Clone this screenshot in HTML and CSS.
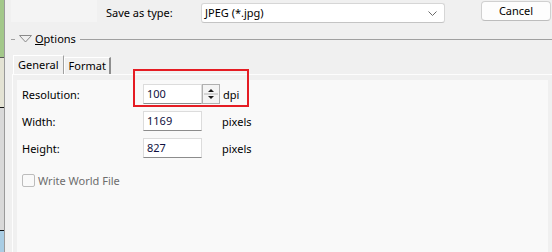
FILE: index.html
```html
<!DOCTYPE html>
<html>
<head>
<meta charset="utf-8">
<link rel="stylesheet" href="styles.css">
</head>
<body>
<div class="screen">
  <div class="mapstrip">
    <div class="m-green"></div>
    <div class="m-dark"></div>
    <div class="m-beige"></div>
    <div class="m-black"></div>
    <div class="m-grey"></div>
    <div class="m-black"></div>
    <div class="m-blue"></div>
  </div>
  <div class="dialog">
    <div class="toprow">
      <div class="preview"></div>
      <div class="typelabel">Save as type:</div>
      <div class="combo">
        <span>JPEG (*.jpg)</span>
        <svg class="chev" width="9" height="5" viewBox="0 0 9 5"><polyline points="0.5,0.5 4.5,4.5 8.5,0.5" fill="none" stroke="#6a6a6a" stroke-width="1"/></svg>
      </div>
      <div class="btn">Cancel</div>
    </div>
    <div class="optrow">
      <div class="dash"></div>
      <svg class="tri" width="13" height="8" viewBox="0 0 13 8"><polygon points="0.5,0.5 12.5,0.5 6.5,7" fill="none" stroke="#8a8a8a" stroke-width="1"/></svg>
      <div class="opttext"><u>O</u>ptions</div>
      <div class="optline"></div>
    </div>
    <div class="tabs">
      <div class="tab active">General</div>
      <div class="tab">Format</div>
    </div>
    <div class="page">
      <div class="panel">
        <div class="form">
          <div class="lbl">Resolution:</div>
          <div class="field"><div class="input">100</div><div class="spin">
            <svg width="16" height="18" viewBox="0 0 16 18"><polygon points="5,7 11,7 8,4" fill="#1a1a1a"/><line x1="1" y1="9" x2="15" y2="9" stroke="#b4b4b4"/><polygon points="5,11 11,11 8,14" fill="#1a1a1a"/></svg>
          </div><span class="unit dpi">dpi</span></div>
          <div class="lbl">Width:</div>
          <div class="field"><div class="input">1169</div><span class="unit">pixels</span></div>
          <div class="lbl">Height:</div>
          <div class="field"><div class="input">827</div><span class="unit">pixels</span></div>
        </div>
        <div class="check"><div class="box"></div><span>Write World File</span></div>
        <div class="highlight"></div>
      </div>
    </div>
  </div>
</div>
</body>
</html>
```
FILE: styles.css
```css
html, body {
  margin: 0;
  padding: 0;
  width: 552px;
  height: 252px;
  overflow: hidden;
  background: #f0f0f0;
  font-family: "Noto Sans", "Liberation Sans", sans-serif;
  font-size: 11px;
  color: #000;
}
.screen {
  display: flex;
  height: 252px;
}
.mapstrip {
  width: 4px;
  display: flex;
  flex-direction: column;
  border-right: 1px solid #9a9a9a;
}
.m-green { height: 57px; background: #a3c88a; }
.m-dark { height: 1px; background: #555; }
.m-beige { height: 49px; background: #e4e3d4; }
.m-black { height: 1px; background: #111; }
.m-grey { height: 122px; background: #d9d9d9; }
.m-blue { flex: 1; background: #a9cde4; }

.dialog {
  flex: 1;
  display: flex;
  flex-direction: column;
  background: #f0f0f0;
  min-width: 0;
}
.toprow {
  display: flex;
  align-items: flex-start;
  height: 32px;
}
.preview {
  margin-left: 6px;
  width: 86px;
  height: 22px;
  background: #f4f4f4;
}
.typelabel {
  margin-left: 9px;
  width: 95px;
  margin-top: 3px;
  line-height: 20px;
}
.combo {
  margin-top: 3px;
  width: 244px;
  height: 20px;
  box-sizing: border-box;
  background: #fff;
  border: 1px solid #d6d6d6;
  border-bottom-color: #c4c4c4;
  border-radius: 3px;
  display: flex;
  align-items: center;
  justify-content: space-between;
  padding: 0 4px 0 3px;
  line-height: 18px;
}
.chev { margin-right: 3px; }
.btn {
  margin-left: 36px;
  margin-top: 1px;
  width: 70px;
  height: 20px;
  box-sizing: border-box;
  background: #fdfdfd;
  border: 1px solid #d0d0d0;
  border-bottom-color: #bdbdbd;
  border-radius: 4px;
  text-align: center;
  line-height: 18px;
}
.optrow {
  display: flex;
  align-items: center;
  height: 14px;
}
.dash {
  margin-left: 6px;
  width: 4px;
  height: 1px;
  background: #a0a0a0;
}
.tri { margin-left: 4px; }
.opttext {
  margin-left: 3px;
  line-height: 14px;
}
.optline {
  flex: 1;
  margin-left: 4px;
  height: 1px;
  background: #a0a0a0;
}
.tabs {
  display: flex;
  align-items: flex-end;
  margin-top: 9px;
  margin-left: 8px;
  height: 19px;
}
.tab {
  box-sizing: border-box;
  height: 17px;
  border-top: 1px solid #fff;
  border-left: 1px solid #fff;
  border-right: 2px solid #8e8e8e;
  padding: 0 3px 0 4px;
  line-height: 16px;
  background: #f0f0f0;
  white-space: nowrap;
}
.tab.active {
  height: 19px;
  line-height: 18px;
  border-right: 1px solid #a0a0a0;
  padding: 0 4px 0 4px;
}
.page {
  flex: 1;
  margin-left: 7px;
  border-top: 1px solid #fdfdfd;
  border-left: 1px solid #fdfdfd;
  padding: 5px 4px 0 4px;
  display: flex;
}
.panel {
  flex: 1;
  position: relative;
  background: #f9f9f9;
  padding-left: 5px;
  padding-top: 4px;
}
.form {
  display: grid;
  grid-template-columns: 121px auto;
  grid-template-rows: 20px 20px 20px;
  row-gap: 7px;
  align-items: center;
}
.field {
  display: flex;
  align-items: center;
  height: 20px;
}
.input {
  width: 59px;
  height: 20px;
  box-sizing: border-box;
  background: #fff;
  border: 1px solid #dcdcdc;
  border-bottom-color: #8c8c8c;
  padding-left: 3px;
  line-height: 18px;
  color: #101040;
}
.spin {
  width: 18px;
  height: 20px;
  box-sizing: border-box;
  border: 1px solid #b0b0b0;
  background: #f4f4f4;
  display: flex;
  align-items: center;
  justify-content: center;
}
.unit { margin-left: 20px; }
.unit.dpi { margin-left: 3px; }
.check {
  display: flex;
  align-items: center;
  margin-top: 15px;
  color: #6d6d6d;
}
.box {
  width: 13px;
  height: 13px;
  box-sizing: border-box;
  border: 1px solid #bcbcbc;
  border-radius: 2px;
  background: #f9f9f9;
  margin-right: 3px;
}
.highlight {
  position: absolute;
  left: 116px;
  top: -11px;
  width: 116px;
  height: 38px;
  box-sizing: border-box;
  border: 2px solid #e51c23;
}
```
